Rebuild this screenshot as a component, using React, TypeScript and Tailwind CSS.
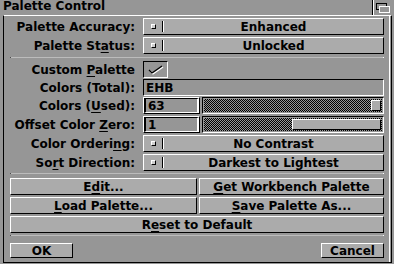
import React from "react";

const raised = "border border-t-white border-l-white border-r-black border-b-black";
const recessed = "border border-t-black border-l-black border-r-white border-b-white";

function U({ children }: { children: React.ReactNode }) {
  return <span className="underline decoration-1 underline-offset-[2px]">{children}</span>;
}

function Row({ label, children, className = "" }: { label: React.ReactNode; children: React.ReactNode; className?: string }) {
  return (
    <div className={`flex items-center h-[17px] ${className}`}>
      <div className="w-[125px] shrink-0 text-right whitespace-nowrap">{label}</div>
      <div className="ml-[8px] flex-1 h-full flex">{children}</div>
    </div>
  );
}

function Cycle({ value }: { value: string }) {
  return (
    <div className={`flex-1 h-full flex items-center bg-[#ababab] ${raised}`}>
      <div className="ml-[7px] w-[5px] h-[5px] border border-t-white border-l-white border-r-black border-b-black bg-[#cfcfcf]" />
      <div className="ml-[6px] h-[11px] w-[2px] border-l border-l-black border-r border-r-white" />
      <div className="flex-1 text-center whitespace-nowrap">{value}</div>
    </div>
  );
}

function StringField({ value }: { value: string }) {
  return (
    <div className={`w-[57px] h-full ${raised} flex`}>
      <div className="flex-1 flex items-center border-t border-t-black border-l-2 border-l-black border-b border-b-white border-r-2 border-r-white pl-[2px]">
        {value}
      </div>
    </div>
  );
}

function Slider({ kind }: { kind: "end" | "half" }) {
  return (
    <div className={`ml-[2px] flex-1 h-full ${recessed} flex p-[1px]`}>
      <div className="flex-1 flex py-[1px] pr-[1px] bg-[image:repeating-conic-gradient(#000_0%_25%,#969696_0%_50%)] bg-[length:2px_2px]">
        {kind === "end" ? (
          <div className={`ml-auto w-[10px] bg-[#ababab] ${raised}`} />
        ) : (
          <div className={`ml-[88px] flex-1 bg-[#ababab] ${raised}`} />
        )}
      </div>
    </div>
  );
}

function Separator({ className = "" }: { className?: string }) {
  return (
    <div className={`h-[1px] flex ${className}`}>
      <div className="w-[1px] bg-[#4a4a4a]" />
      <div className="flex-1 bg-[#bcbcbc]" />
      <div className="w-[1px] bg-white" />
    </div>
  );
}

function Button({ children, className = "" }: { children: React.ReactNode; className?: string }) {
  return (
    <div className={`h-[17px] flex items-center justify-center bg-[#ababab] whitespace-nowrap ${raised} ${className}`}>
      {children}
    </div>
  );
}

export default function App() {
  return (
    <div className="w-[394px] h-[264px] bg-[#969696] text-black text-[12px] font-bold leading-none font-['DejaVu_Sans',sans-serif] overflow-hidden">
      <div className="h-[15px] flex">
        <div className="pl-[3px] whitespace-nowrap">Palette Control</div>
        <div className="ml-auto w-[22px] h-[15px] flex">
          <div className="w-[1px] bg-black" />
          <div className="w-[1px] bg-white" />
          <svg width="20" height="15" viewBox="0 0 20 15">
            <rect x="2.5" y="3.5" width="10" height="6" fill="#969696" stroke="#000" />
            <rect x="5.5" y="6.5" width="10" height="6" fill="#969696" stroke="#fff" />
          </svg>
        </div>
      </div>
      <div className="ml-[3px] w-[389px] h-[248px] border-l border-l-black border-t border-t-white border-r border-r-black border-b border-b-black flex">
        <div className="w-[386px] h-full border-r border-r-white pl-[6px] pr-[5px] pt-[2px] flex flex-col">
          <Row label="Palette Accuracy:"><Cycle value="Enhanced" /></Row>
          <Row label={<>Palette St<U>a</U>tus:</>} className="mt-[2px]"><Cycle value="Unlocked" /></Row>
          <Separator className="mt-[3px]" />
          <Row label={<>Custom <U>P</U>alette</>} className="mt-[3px]">
            <div className={`w-[25px] h-full ${recessed}`}>
              <svg width="23" height="15" viewBox="0 0 23 15">
                <polyline points="5,8 8,11 18,4" fill="none" stroke="#fff" strokeWidth="1.3" transform="translate(1,1)" />
                <polyline points="5,8 8,11 18,4" fill="none" stroke="#000" strokeWidth="1.3" />
              </svg>
            </div>
          </Row>
          <Row label="Colors (Total):" className="mt-[1px]">
            <div className={`flex-1 h-full flex items-center pl-[2px] ${recessed}`}>EHB</div>
          </Row>
          <Row label={<>Colors (<U>U</U>sed):</>} className="mt-[1px]">
            <StringField value="63" />
            <Slider kind="end" />
          </Row>
          <Row label={<>Offset Color <U>Z</U>ero:</>} className="mt-[2px]">
            <StringField value="1" />
            <Slider kind="half" />
          </Row>
          <Row label={<>Color Orderi<U>n</U>g:</>} className="mt-[2px]"><Cycle value="No Contrast" /></Row>
          <Row label={<>So<U>r</U>t Direction:</>} className="mt-[2px]"><Cycle value="Darkest to Lightest" /></Row>
          <Separator className="mt-[2px]" />
          <div className="mt-[4px] flex">
            <Button className="w-[187px]">E<U>d</U>it...</Button>
            <Button className="ml-[2px] flex-1"><U>G</U>et Workbench Palette</Button>
          </div>
          <div className="mt-[2px] flex">
            <Button className="w-[187px]"><U>L</U>oad Palette...</Button>
            <Button className="ml-[2px] flex-1"><U>S</U>ave Palette As...</Button>
          </div>
          <Button className="mt-[2px]">R<U>e</U>set to Default</Button>
          <Separator className="mt-[2px]" />
          <div className="mt-[7px] flex justify-between">
            <Button className="w-[63px] !h-[15px]"><U>O</U>K</Button>
            <Button className="w-[63px] !h-[15px]"><U>C</U>ancel</Button>
          </div>
        </div>
      </div>
    </div>
  );
}
